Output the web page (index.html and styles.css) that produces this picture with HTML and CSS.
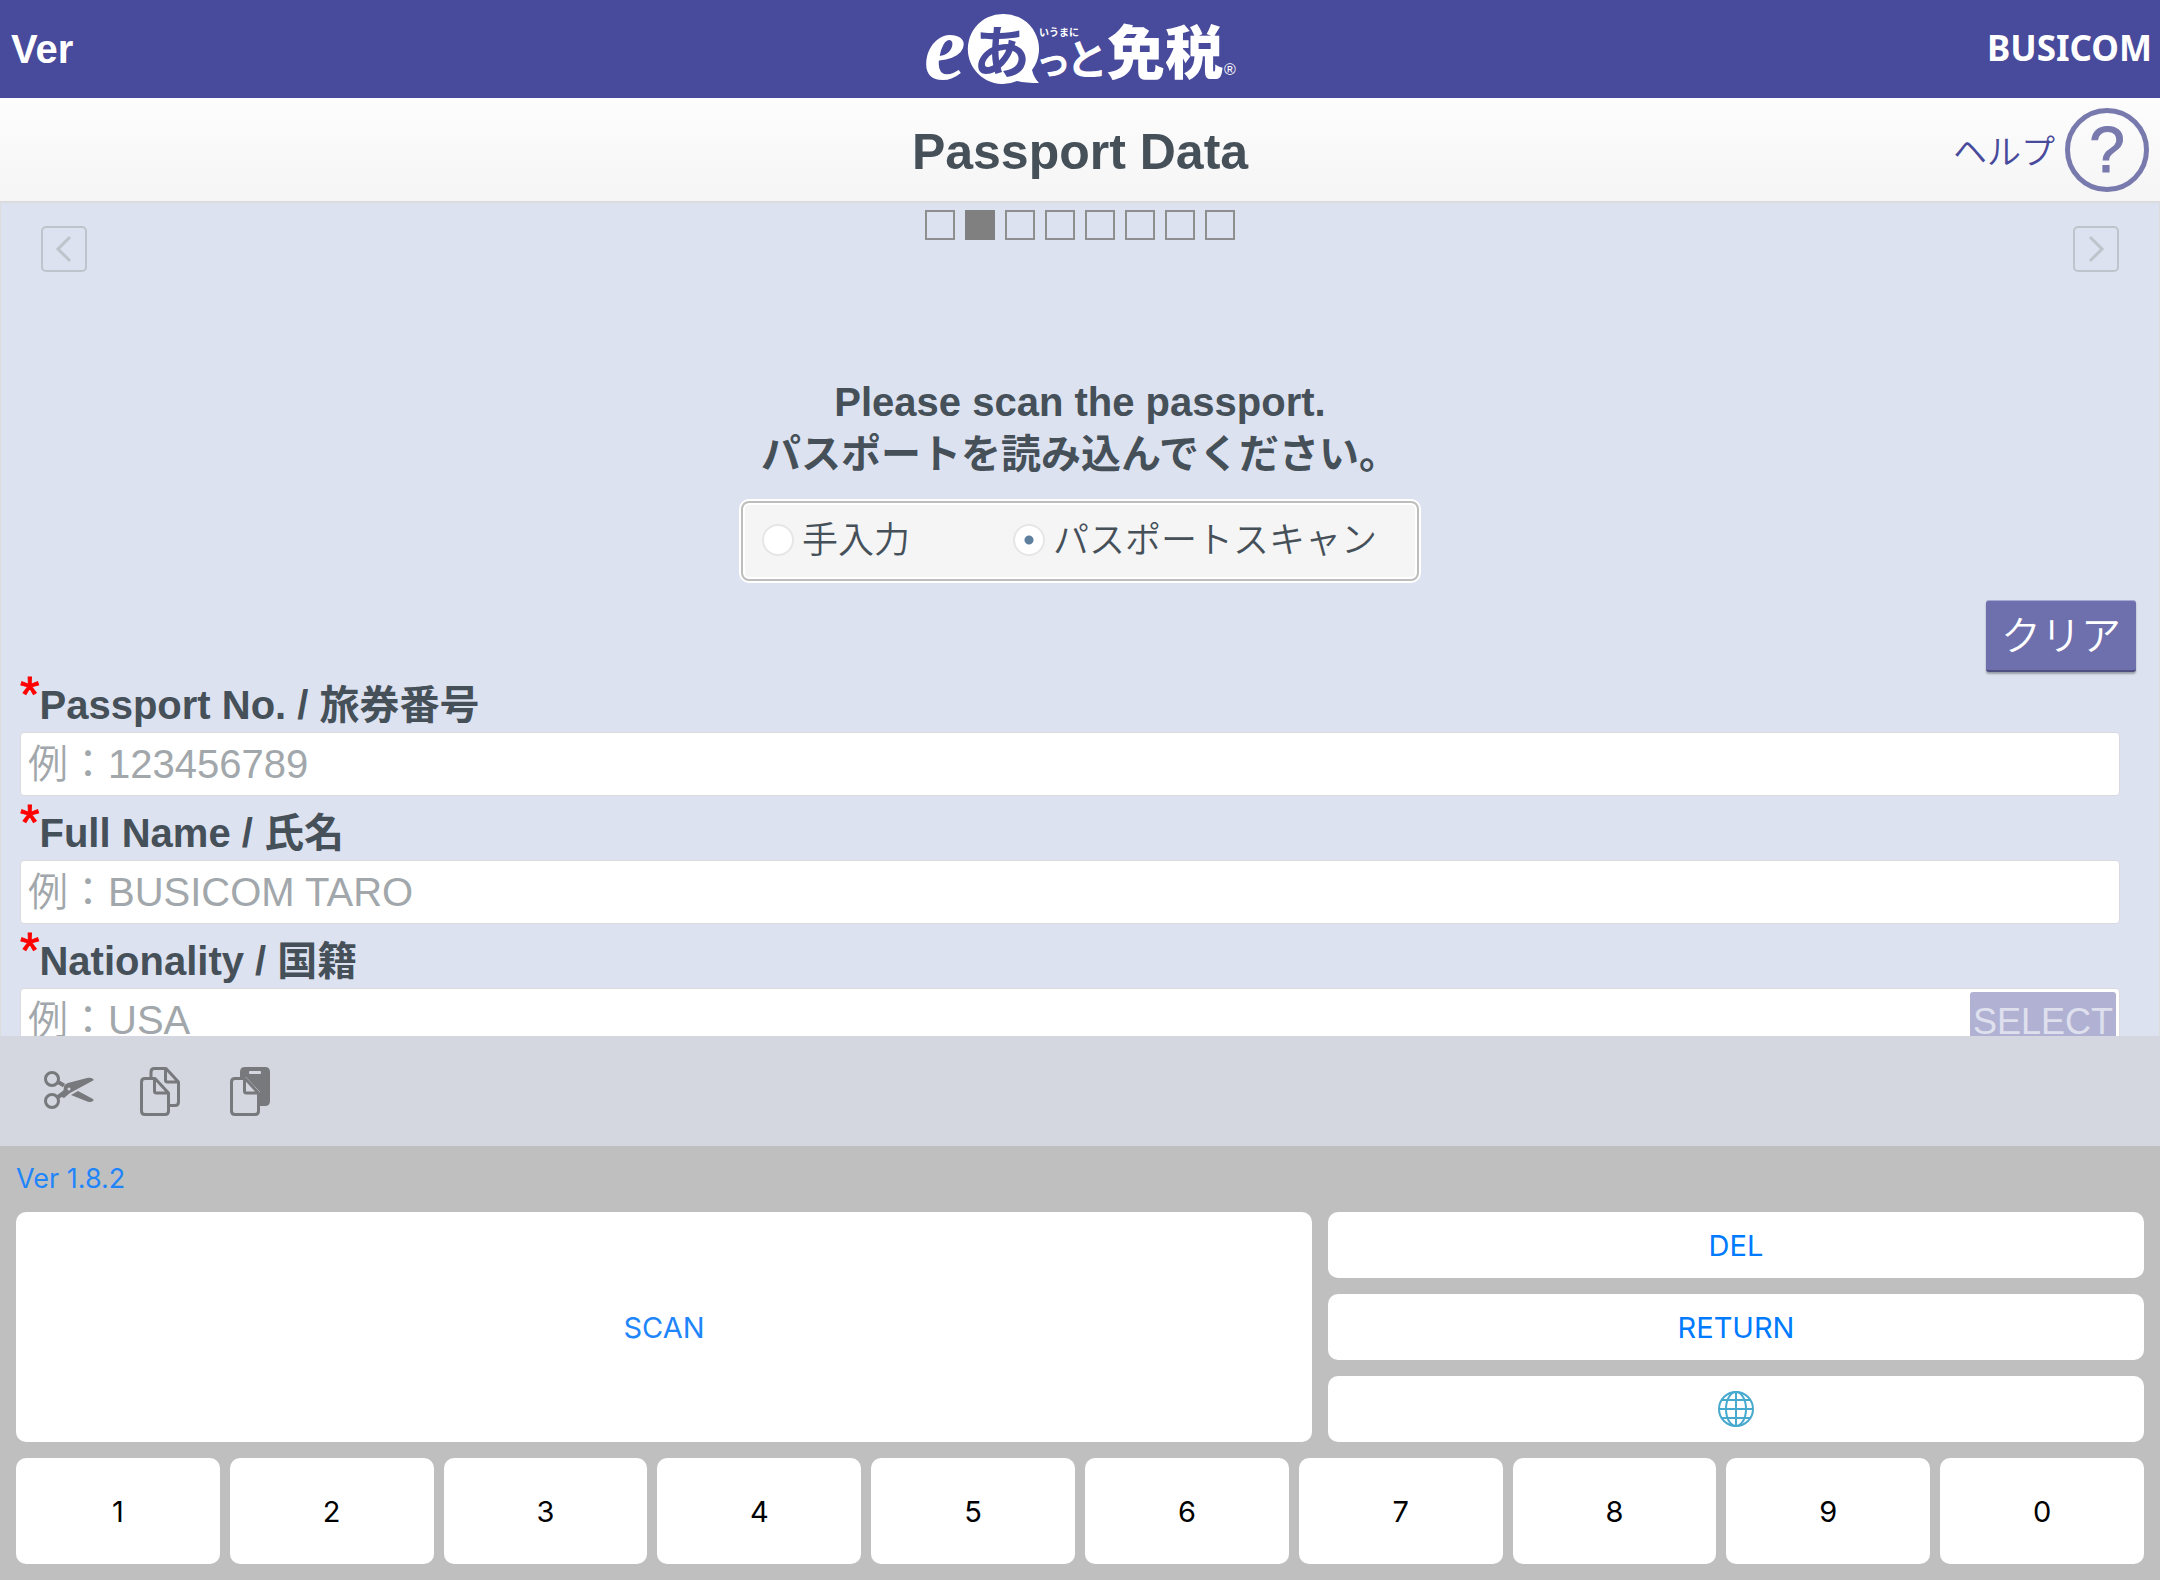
FILE: index.html
```html
<!DOCTYPE html>
<html lang="ja">
<head>
    <meta charset="UTF-8">
    <meta name="viewport" content="width=device-width, initial-scale=1.0">
    <title>Passport Data</title>
    <link rel="stylesheet" href="styles.css">
</head>
<body>
    <header class="topbar">
        <span class="topbar-ver">Ver</span>
        <svg class="logo" viewBox="0 0 316 78" role="img" aria-label="eあっと免税">
            <text class="logo-e" x="0" y="69">e</text>
            <path d="M79 4a35 35 0 1 0 14 67q9 2 22 2-5-5-7-13a35 35 0 0 0-29-56z" fill="#fff"/>
            <text class="logo-a" x="49" y="63">あ</text>
            <text class="logo-ruby" x="115" y="26">いうまに</text>
            <text class="logo-tto" x="111" y="65">っ</text>
            <text class="logo-to" x="142" y="65">と</text>
            <text class="logo-kanji" x="183" y="64">免税</text>
            <text class="logo-reg" x="300" y="65">®</text>
        </svg>
        <span class="topbar-brand">BUSICOM</span>
    </header>

    <div class="titlebar">
        <h1>Passport Data</h1>
        <a class="help" href="#help">ヘルプ<span class="help-mark">?</span></a>
    </div>

    <main class="content">
        <nav class="pager">
            <button type="button" class="pager-button" aria-label="Back">
                <svg viewBox="0 0 46 46"><path d="M29 11 17 23l12 12"/></svg>
            </button>
            <ol class="steps">
                <li></li>
                <li class="current"></li>
                <li></li>
                <li></li>
                <li></li>
                <li></li>
                <li></li>
                <li></li>
            </ol>
            <button type="button" class="pager-button" aria-label="Next">
                <svg viewBox="0 0 46 46"><path d="m17 11 12 12-12 12"/></svg>
            </button>
        </nav>

        <p class="message">Please scan the passport.<br>パスポートを読み込んでください。</p>

        <div class="input-mode">
            <label><input type="radio" name="mode" value="manual">手入力</label>
            <label><input type="radio" name="mode" value="scan" checked>パスポートスキャン</label>
        </div>

        <div class="actions">
            <button type="button" class="clear-button">クリア</button>
        </div>

        <form class="fields">
            <div class="field">
                <label for="passportNo"><span class="required">*</span>Passport No. / 旅券番号</label>
                <input type="text" id="passportNo" placeholder="例：123456789">
            </div>
            <div class="field">
                <label for="fullName"><span class="required">*</span>Full Name / 氏名</label>
                <input type="text" id="fullName" placeholder="例：BUSICOM TARO">
            </div>
            <div class="field">
                <label for="nationality"><span class="required">*</span>Nationality / 国籍</label>
                <div class="field-control">
                    <input type="text" id="nationality" placeholder="例：USA">
                    <button type="button" class="select-button">SELECT</button>
                </div>
            </div>
        </form>
    </main>

    <div class="edit-bar">
        <button type="button" aria-label="Cut">
            <svg width="50" height="50" viewBox="0 0 50 50">
                <g fill="none" stroke="#77797d" stroke-width="3">
                    <circle cx="8" cy="13" r="6.5"/>
                    <circle cx="8" cy="35" r="6.5"/>
                    <path d="m14 16 6 3.500M14 31l7-5" stroke-width="4"/>
                </g>
                <path d="M20 20q1-2 4-3l19-5q5-1 7 2L26 27l-6 5-4-2q4-3 4-10z" fill="#77797d"/>
                <path d="m27 29 7-4 15 8q1 1 0 2-3 2-7 0z" fill="#77797d"/>
                <circle cx="25" cy="23" r="1.500" fill="#d4d7df"/>
            </svg>
        </button>
        <button type="button" aria-label="Copy">
            <svg width="44" height="50" viewBox="0 0 44 50">
                <g fill="none" stroke="#77797d" stroke-width="3" stroke-linejoin="round">
                    <path d="M11 12V6q0-3.500 3.500-3.500H26L38.500 16v20q0 3.500-3.500 3.500h-5M25.500 3v11q0 2 2 2H38"/>
                    <path d="M5 12.500h10L28.500 27v18q0 3.500-3.500 3.500H5q-3.500 0-3.500-3.500V16q0-3.500 3.500-3.500zM14.500 13v12q0 2 2 2H28"/>
                </g>
            </svg>
        </button>
        <button type="button" aria-label="Paste">
            <svg width="44" height="50" viewBox="0 0 44 50">
                <path d="M10 11V6q0-5 5-5h20q5 0 5 5v29q0 5-5 5h-5V26L16 11z" fill="#77797d"/>
                <rect x="19" y="5" width="12" height="3" rx="1" fill="#d4d7df"/>
                <path d="M5 12.500h10L28.500 27v18q0 3.500-3.500 3.500H5q-3.500 0-3.500-3.500V16q0-3.500 3.500-3.500zM14.500 13v12q0 2 2 2H28" fill="#d4d7df" stroke="#77797d" stroke-width="3" stroke-linejoin="round"/>
            </svg>
        </button>
    </div>

    <div class="keyboard">
        <div class="keyboard-ver">Ver 1.8.2</div>
        <div class="keys-main">
            <button type="button" class="key key-scan">SCAN</button>
            <button type="button" class="key">DEL</button>
            <button type="button" class="key">RETURN</button>
            <button type="button" class="key" aria-label="Switch keyboard">
                <svg width="38" height="38" viewBox="0 0 38 38" fill="none" stroke="#48a9cf" stroke-width="2">
                    <circle cx="19" cy="19" r="17"/>
                    <ellipse cx="19" cy="19" rx="10" ry="17"/>
                    <path d="M19 2v34M2 19h34M4 10h30M4 28h30"/>
                </svg>
            </button>
        </div>
        <div class="keys-digits">
            <button type="button" class="key">1</button>
            <button type="button" class="key">2</button>
            <button type="button" class="key">3</button>
            <button type="button" class="key">4</button>
            <button type="button" class="key">5</button>
            <button type="button" class="key">6</button>
            <button type="button" class="key">7</button>
            <button type="button" class="key">8</button>
            <button type="button" class="key">9</button>
            <button type="button" class="key">0</button>
        </div>
    </div>
</body>
</html>
```

FILE: styles.css
```css
* {
    box-sizing: border-box;
}
body {
    margin: 0;
    height: 100vh;
    display: flex;
    flex-direction: column;
    overflow: hidden;
    font-family: "Liberation Sans", "Noto Sans CJK JP", sans-serif;
    font-size: 40px;
    color: #455059;
    background-color: #dde2f0;
}
button, input {
    font-family: inherit;
}
button {
    padding: 0;
    border: none;
    cursor: pointer;
}
svg {
    display: block;
}

/* Header */
.topbar {
    display: grid;
    grid-template-columns: 1fr 316px 1fr;
    align-items: center;
    height: 98px;
    padding: 0 8px 0 11px;
    background-color: #484a9b;
    color: #fff;
    font-weight: bold;
}
.topbar-brand {
    justify-self: end;
    font-family: "Noto Sans", sans-serif;
    font-size: 35px;
    line-height: 52px;
    padding-bottom: 2px;
}
.logo {
    width: 316px;
    height: 78px;
    overflow: visible;
    fill: #fff;
    font-family: "Noto Sans CJK JP", sans-serif;
    font-weight: bold;
}
.logo-e {
    font-family: "Liberation Serif", serif;
    font-size: 94px;
    font-style: italic;
    font-weight: bold;
}
.logo-a {
    font-size: 57px;
    fill: #484a9b;
}
.logo-ruby {
    font-size: 10px;
}
.logo-tto {
    font-size: 36px;
}
.logo-to {
    font-size: 42px;
}
.logo-kanji {
    font-size: 58px;
    font-weight: 900;
}
.logo-reg {
    font-family: "Liberation Sans", sans-serif;
    font-size: 16px;
    font-weight: normal;
}
.titlebar {
    display: grid;
    grid-template-columns: 1fr auto 1fr;
    align-items: center;
    height: 103px;
    padding: 0 11px;
    background: linear-gradient(#fdfdfd, #f5f5f5);
}
.titlebar h1 {
    grid-column: 2;
    margin: 0;
    padding-top: 4px;
    font-size: 50px;
}
.help {
    justify-self: end;
    display: flex;
    align-items: center;
    gap: 10px;
    font-size: 34px;
    font-weight: 350;
    color: #484a9b;
    text-decoration: none;
}
.help-mark {
    display: flex;
    align-items: center;
    justify-content: center;
    width: 84px;
    height: 84px;
    border: 5px solid #7879ad;
    border-radius: 50%;
    font-size: 64px;
    font-weight: normal;
    color: #7879ad;
    -webkit-text-stroke: 1px #7879ad;
}

/* Page content */
.content {
    flex: 1;
    min-height: 0;
    overflow: hidden;
    border: 1px solid #dcdcdf;
    border-top-width: 2px;
    border-bottom: none;
}
.pager {
    display: flex;
    justify-content: space-between;
    padding: 7px 40px 0;
}
.pager-button {
    width: 46px;
    height: 46px;
    margin-top: 16px;
    border: 2px solid #bfc3cb;
    border-radius: 5px;
    background: none;
}
.pager-button svg {
    margin: -2px;
    fill: none;
    stroke: #bfc3cb;
    stroke-width: 3;
}
.steps {
    display: flex;
    gap: 10px;
    margin: 0;
    padding: 0;
    list-style: none;
}
.steps li {
    width: 30px;
    height: 30px;
    border: 2px solid #8e8e8e;
}
.steps .current {
    background-color: #808080;
    border-color: #808080;
}
.message {
    margin: 104px 0 21px;
    font-weight: bold;
    line-height: 52px;
    text-align: center;
}
.input-mode {
    display: flex;
    justify-content: space-between;
    width: 678px;
    height: 80px;
    margin: 0 auto;
    padding: 0 40px 0 19px;
    border: 2px solid #bdbdbd;
    border-radius: 8px;
    background-color: #f5f5f5;
    box-shadow: 0 0 0 2px #fff, inset 0 0 0 2px #fff;
    font-size: 36px;
    font-weight: 350;
    line-height: 76px;
}
.input-mode label {
    display: flex;
    gap: 8px;
}
.input-mode input {
    appearance: none;
    width: 32px;
    height: 32px;
    margin: 21px 0 0;
    border: 2px solid #e6e6e6;
    border-radius: 50%;
    background-color: #fff;
}
.input-mode input:checked {
    background-image: radial-gradient(circle, #5f7f9f 4px, #fff 5px);
}
.actions {
    display: flex;
    justify-content: flex-end;
    padding: 19px 23px 0 0;
}
.clear-button {
    width: 150px;
    height: 72px;
    padding-bottom: 5px;
    border-top: 1px solid #a7a8d2;
    border-bottom: 2px solid #504f82;
    border-radius: 3px;
    background-color: #6e6fad;
    box-shadow: 0 2px 2px rgba(0, 0, 0, 0.3);
    font-size: 40px;
    font-weight: 350;
    color: #fff;
}

/* Form fields */
.fields {
    padding: 0 39px 0 19px;
}
.field label {
    display: flex;
    height: 60px;
    padding-top: 6px;
    font-weight: bold;
    line-height: 54px;
}
.field:not(:first-child) label {
    height: 64px;
    padding-top: 10px;
}
.required {
    color: #f00;
    font-size: 50px;
    font-weight: normal;
    line-height: 34px;
    -webkit-text-stroke: 1px #f00;
}
.field input {
    display: block;
    width: 100%;
    height: 64px;
    padding: 0 7px;
    border: 1px solid #dadbe0;
    border-radius: 4px;
    font-size: 40px;
    font-weight: 350;
    background-color: #fff;
}
.field input::placeholder {
    color: #a1a7ab;
}
.field-control {
    position: relative;
}
.select-button {
    position: absolute;
    top: 4px;
    right: 4px;
    bottom: 4px;
    width: 146px;
    padding-top: 3px;
    border-radius: 3px;
    background-color: #b1b2d3;
    font-size: 36px;
    color: #dfe0ed;
}

/* Cut / copy / paste bar above the keyboard */
.edit-bar {
    display: flex;
    align-items: center;
    gap: 46px;
    height: 110px;
    padding: 0 44px;
    background-color: #d4d7df;
}
.edit-bar button {
    background: none;
}

/* Scanner keyboard */
.keyboard {
    padding: 0 16px 16px;
    background-color: #bfbfbf;
    font-family: Inter, Roboto, sans-serif;
}
.keyboard-ver {
    height: 66px;
    font-size: 27px;
    line-height: 66px;
    color: #1f85fb;
}
.keys-main {
    display: grid;
    grid-template-columns: 1296fr 816fr;
    grid-template-rows: repeat(3, 66px);
    gap: 16px;
    margin-bottom: 16px;
}
.key {
    display: flex;
    align-items: center;
    justify-content: center;
    border-radius: 10px;
    background-color: #fff;
    font-size: 29px;
    color: #007aff;
}
.key-scan {
    grid-row: span 3;
    color: #1f85fb;
}
.keys-digits {
    display: grid;
    grid-template-columns: repeat(10, 1fr);
    gap: 10px;
}
.keys-digits .key {
    height: 106px;
    color: #000;
}
```
